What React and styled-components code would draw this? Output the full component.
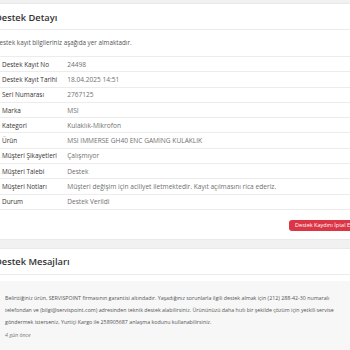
import React from 'react'
import styled, { createGlobalStyle } from 'styled-components'

const GlobalStyle = createGlobalStyle`
  html, body {
    margin: 0;
    padding: 0;
    overflow: hidden;
    background: #f1f1f1;
    font-family: 'Open Sans', 'Liberation Sans', sans-serif;
  }
`

const rows = [
  ['Destek Kayıt No', '24498'],
  ['Destek Kayıt Tarihi', '18.04.2025 14:51'],
  ['Seri Numarası', '2767125'],
  ['Marka', 'MSI'],
  ['Kategori', 'Kulaklık-Mikrofon'],
  ['Ürün', 'MSI IMMERSE GH40 ENC GAMING KULAKLIK'],
  ['Müşteri Şikayetleri', 'Çalışmıyor'],
  ['Müşteri Talebi', 'Destek'],
  ['Müşteri Notları', 'Müşteri değişim için aciliyet iletmektedir. Kayıt açılmasını rica ederiz.'],
  ['Durum', 'Destek Verildi'],
]

function App() {
  return (
    <>
      <GlobalStyle />
      <Page>
        <Card>
          <CardHeader>Destek Detayı</CardHeader>
          <CardBody>
            <Intro>Destek kayıt bilgileriniz aşağıda yer almaktadır.</Intro>
            <Table>
              <tbody>
                {rows.map(([label, value]) => (
                  <tr key={label}>
                    <Label>{label}</Label>
                    <Value>{value}</Value>
                  </tr>
                ))}
              </tbody>
            </Table>
            <Actions>
              <CancelButton>Destek Kaydını İptal Et</CancelButton>
            </Actions>
          </CardBody>
        </Card>

        <Card>
          <CardHeader>Destek Mesajları</CardHeader>
          <CardBody $tight>
            <Message>
              <p>
                Belirttiğiniz ürün, SERVISPOINT firmasının garantisi altındadır. Yaşadığınız sorunlarla ilgili destek almak için (212) 288-42-30 numaralı
                telefondan ve (bilgi@servispoint.com) adresinden teknik destek alabilirsiniz. Ürününüzü daha hızlı bir şekilde çözüm için yetkili servise
                göndermek isterseniz, Yurtiçi Kargo ile 258905687 anlaşma kodunu kullanabilirsiniz.
              </p>
              <Time>4 gün önce</Time>
            </Message>
          </CardBody>
        </Card>
      </Page>
    </>
  )
}

const Page = styled.div`
  width: 397px;
  margin-left: -22px;
  padding-top: 3px;
`

const Card = styled.div`
  background: #fff;
  border: 1px solid #e9e9e9;
  margin-bottom: 8px;
`

const CardHeader = styled.div`
  height: 24px;
  display: flex;
  align-items: center;
  padding: 1px 16px 0;
  border-bottom: 1px solid #ececec;
  font-size: 9.3px;
  font-weight: 600;
  color: #333;
`

const CardBody = styled.div`
  padding: ${p => (p.$tight ? '6px 16px 0' : '7px 16px 8px')};
`

const Intro = styled.p`
  margin: 0 0 7px;
  font-size: 6.3px;
  line-height: 12px;
  color: #555;
`

const Table = styled.table`
  width: 100%;
  border-collapse: collapse;
  border-top: 1px solid #ececec;
  font-size: 6.4px;

  td {
    height: 14.3px;
    padding: 0 5px;
    border-bottom: 1px solid #ececec;
    vertical-align: middle;
  }
`

const Label = styled.td`
  width: 49px;
  color: #333;
  font-weight: 500;
  white-space: nowrap;

  && {
    padding-left: 7px;
  }
`

const Value = styled.td`
  color: #707070;
  font-size: 6.6px;
`

const Actions = styled.div`
  display: flex;
  justify-content: flex-end;
  padding-top: 10px;
`

const CancelButton = styled.button`
  height: 11px;
  padding: 0 6px;
  border: none;
  border-radius: 3px;
  background: #dc3545;
  color: #fff;
  font-family: 'Open Sans', 'Liberation Sans', sans-serif;
  font-size: 5.5px;
  line-height: 11px;
`

const Message = styled.div`
  background: #f7f7f7;
  padding: 11px 10px 16px;

  p {
    margin: 0;
    font-size: 5.3px;
    line-height: 12px;
    color: #555;
  }
`

const Time = styled.div`
  margin-top: 3px;
  font-size: 5.3px;
  font-style: italic;
  color: #777;
`

export default App
